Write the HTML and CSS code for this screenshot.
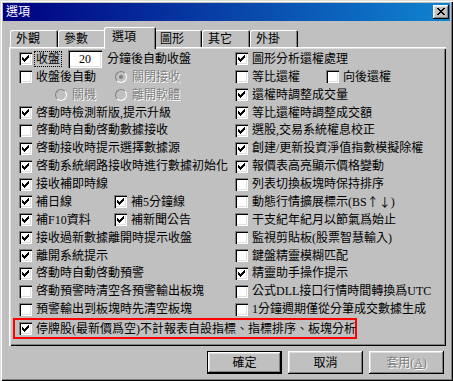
FILE: index.html
```html
<!DOCTYPE html>
<html lang="zh-TW">

<head>
    <meta charset="UTF-8">
    <title>選項</title>
    <link rel="stylesheet" href="styles.css">
</head>

<body>
    <svg class="defs" width="0" height="0">
        <symbol id="tick" viewBox="0 0 7 7">
            <path d="M6 0h1v1h-1zM5 1h2v1h-2zM0 2h1v1h-1zM4 2h3v1h-3zM0 3h2v1h-2zM3 3h3v1h-3zM0 4h5v1h-5zM1 5h3v1h-3zM2 6h1v1h-1z" />
        </symbol>
    </svg>

    <div class="window">
        <div class="titlebar">
            <span class="title">選項</span>
            <span class="close">
                <svg width="8" height="7" viewBox="0 0 8 7">
                    <path d="M0 0h2v1h-2zM6 0h2v1h-2zM1 1h2v1h-2zM5 1h2v1h-2zM2 2h4v1h-4zM3 3h2v1h-2zM2 4h4v1h-4zM1 5h2v1h-2zM5 5h2v1h-2zM0 6h2v1h-2zM6 6h2v1h-2z" />
                </svg>
            </span>
        </div>

        <div class="tabs">
            <div class="tab">外觀</div>
            <div class="tab">參數</div>
            <div class="tab active">選項</div>
            <div class="tab">圖形</div>
            <div class="tab">其它</div>
            <div class="tab">外掛</div>
        </div>

        <div class="panel">
            <div class="cols">
                <!-- 左欄 -->
                <div class="col col-left">
                    <div class="row">
                        <span class="cell w49">
                            <span class="box on"><svg><use href="#tick" /></svg></span>
                            <span class="focus">收盤</span>
                        </span>
                        <span class="edit">20</span>
                        <span class="after">分鐘後自動收盤</span>
                    </div>
                    <div class="row">
                        <span class="cell w96">
                            <span class="box"></span>收盤後自動
                        </span>
                        <span class="radio on"></span><span class="off">關閉接收</span>
                    </div>
                    <div class="row indent">
                        <span class="cell w60">
                            <span class="radio"></span><span class="off">關機</span>
                        </span>
                        <span class="radio"></span><span class="off">離開軟體</span>
                    </div>
                    <div class="row"><span class="box on"><svg><use href="#tick" /></svg></span>啓動時檢測新版,提示升級</div>
                    <div class="row"><span class="box"></span>啓動時自動啓動數據接收</div>
                    <div class="row"><span class="box on"><svg><use href="#tick" /></svg></span>啓動接收時提示選擇數據源</div>
                    <div class="row"><span class="box on"><svg><use href="#tick" /></svg></span>啓動系統網路接收時進行數據初始化</div>
                    <div class="row"><span class="box on"><svg><use href="#tick" /></svg></span>接收補即時線</div>
                    <div class="row">
                        <span class="cell w95"><span class="box on"><svg><use href="#tick" /></svg></span>補日線</span>
                        <span class="box on"><svg><use href="#tick" /></svg></span>補5分鐘線
                    </div>
                    <div class="row">
                        <span class="cell w95"><span class="box on"><svg><use href="#tick" /></svg></span>補F10資料</span>
                        <span class="box on"><svg><use href="#tick" /></svg></span>補新聞公告
                    </div>
                    <div class="row"><span class="box on"><svg><use href="#tick" /></svg></span>接收過新數據離開時提示收盤</div>
                    <div class="row"><span class="box on"><svg><use href="#tick" /></svg></span>離開系統提示</div>
                    <div class="row"><span class="box on"><svg><use href="#tick" /></svg></span>啓動時自動啓動預警</div>
                    <div class="row"><span class="box"></span>啓動預警時清空各預警輸出板塊</div>
                    <div class="row"><span class="box"></span>預警輸出到板塊時先清空板塊</div>
                </div>

                <!-- 右欄 -->
                <div class="col">
                    <div class="row"><span class="box on"><svg><use href="#tick" /></svg></span>圖形分析還權處理</div>
                    <div class="row">
                        <span class="cell w91"><span class="box"></span>等比還權</span>
                        <span class="box"></span>向後還權
                    </div>
                    <div class="row"><span class="box on"><svg><use href="#tick" /></svg></span>還權時調整成交量</div>
                    <div class="row"><span class="box on"><svg><use href="#tick" /></svg></span>等比還權時調整成交額</div>
                    <div class="row"><span class="box on"><svg><use href="#tick" /></svg></span>選股,交易系統權息校正</div>
                    <div class="row"><span class="box on"><svg><use href="#tick" /></svg></span>創建/更新投資淨值指數模擬除權</div>
                    <div class="row"><span class="box on"><svg><use href="#tick" /></svg></span>報價表高亮顯示價格變動</div>
                    <div class="row"><span class="box"></span>列表切換板塊時保持排序</div>
                    <div class="row"><span class="box"></span>動態行情擴展標示(BS<span class="cjk">↑↓</span>)</div>
                    <div class="row"><span class="box"></span>干支紀年紀月以節氣爲始止</div>
                    <div class="row"><span class="box"></span>監視剪貼板(股票智慧輸入)</div>
                    <div class="row"><span class="box"></span>鍵盤精靈模糊匹配</div>
                    <div class="row"><span class="box on"><svg><use href="#tick" /></svg></span>精靈助手操作提示</div>
                    <div class="row"><span class="box"></span>公式DLL接口行情時間轉換爲UTC</div>
                    <div class="row"><span class="box"></span>1分鐘週期僅從分筆成交數據生成</div>
                </div>
            </div>

            <div class="row mark">
                <span class="box on"><svg><use href="#tick" /></svg></span>停牌股(最新價爲空)不計報表自設指標、指標排序、板塊分析
            </div>
        </div>

        <div class="buttons">
            <span class="btn default">確定</span>
            <span class="btn">取消</span>
            <span class="btn off">套用(<u>A</u>)</span>
        </div>
    </div>
</body>

</html>
```

FILE: styles.css
```css
* {
    box-sizing: border-box;
}

body {
    margin: 0;
    font-family: "Liberation Serif", "Noto Sans CJK TC", serif;
    font-size: 12px;
    line-height: 14px;
    color: #000;
    background: #c0c0c0;
}

.defs {
    display: block;
    width: 0;
    height: 0;
}

.cjk {
    font-family: "Noto Sans CJK TC", sans-serif;
}

.window {
    width: 453px;
    height: 381px;
    padding: 3px;
    background: #c0c0c0;
    box-shadow: inset 1px 1px #dfdfdf, inset 2px 2px #fff, inset -1px -1px #000, inset -2px -2px #808080;
}

/* 標題列 */
.titlebar {
    height: 18px;
    display: flex;
    align-items: center;
    justify-content: space-between;
    padding: 0 1px 0 3px;
    background: linear-gradient(to right, #000080, #1084d0);
    color: #fff;
}

.close {
    width: 16px;
    height: 14px;
    padding: 3px 0 0 4px;
    background: #c0c0c0;
    box-shadow: inset -1px -1px #000, inset 1px 1px #fff, inset -2px -2px #808080, inset 2px 2px #dfdfdf;
}

.close svg {
    display: block;
}

/* 分頁 */
.tabs {
    display: flex;
    align-items: flex-end;
    height: 20px;
    margin: 6px 0 0 7px;
    position: relative;
    z-index: 1;
}

.tab {
    width: 48px;
    height: 17px;
    display: flex;
    align-items: center;
    padding-left: 6px;
    background: #c0c0c0;
    border-radius: 2px 2px 0 0;
    box-shadow: inset 1px 1px #fff, inset -1px 0 #000, inset -2px 0 #808080;
}

.tab.active {
    position: relative;
    width: 52px;
    height: 22px;
    margin: 0 -2px -2px;
    padding: 0 0 3px 8px;
}

.panel {
    width: 437px;
    height: 299px;
    margin-left: 6px;
    padding: 3px 0 0 10px;
    box-shadow: inset 1px 1px #fff, inset 2px 2px #dfdfdf, inset -1px -1px #000, inset -2px -2px #808080;
}

.cols {
    display: flex;
}

.col-left {
    width: 216px;
}

.row {
    height: 17.875px;
    display: flex;
    align-items: center;
    white-space: nowrap;
}

.row.indent {
    padding-left: 36px;
}

.cell {
    display: flex;
    align-items: center;
    flex: none;
}

.w49 { width: 49px; }
.w60 { width: 60px; }
.w91 { width: 91px; }
.w95 { width: 95px; }
.w96 { width: 96px; }

/* 核取方塊 */
.box {
    flex: none;
    width: 13px;
    height: 13px;
    margin-right: 4px;
    padding: 3px;
    background: #fff;
    box-shadow: inset 1px 1px #808080, inset 2px 2px #000, inset -1px -1px #fff, inset -2px -2px #dfdfdf;
}

.box svg {
    display: block;
    width: 7px;
    height: 7px;
}

.radio {
    flex: none;
    width: 12px;
    height: 12px;
    margin-right: 5px;
    border-radius: 50%;
    border: 1px solid;
    border-color: #808080 #fff #fff #808080;
    background: #c0c0c0;
    display: flex;
    align-items: center;
    justify-content: center;
}

.radio.on::after {
    content: "";
    width: 4px;
    height: 4px;
    border-radius: 50%;
    background: #808080;
}

.off {
    color: #808080;
    text-shadow: 1px 1px 0 #fff;
}

.focus {
    margin-left: -2px;
    padding: 0 1px;
    border: 1px dotted #000;
}

.edit {
    flex: none;
    width: 34px;
    height: 18px;
    display: flex;
    align-items: center;
    justify-content: center;
    background: #fff;
    box-shadow: inset 1px 1px #808080, inset 2px 2px #000, inset -1px -1px #fff, inset -2px -2px #dfdfdf;
}

.after {
    margin-left: 5px;
}

.row.mark {
    width: 344px;
    height: 21px;
    margin-left: -6px;
    padding-left: 4px;
    border: 2px solid #f00;
}

/* 按鈕 */
.buttons {
    display: flex;
    justify-content: flex-end;
    gap: 6px;
    margin-top: 5px;
    padding-right: 6px;
}

.btn {
    width: 75px;
    height: 23px;
    display: flex;
    align-items: center;
    justify-content: center;
    background: #c0c0c0;
    box-shadow: inset -1px -1px #000, inset 1px 1px #fff, inset -2px -2px #808080, inset 2px 2px #dfdfdf;
}

.btn.default {
    border: 1px solid #000;
}

.btn.off u {
    text-decoration: underline;
}
```
